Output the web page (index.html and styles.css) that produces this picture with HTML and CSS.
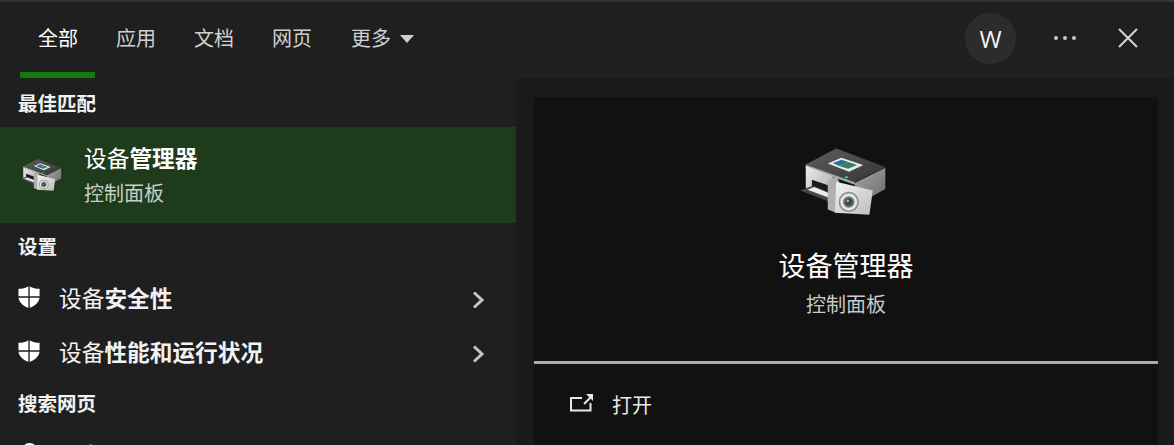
FILE: index.html
```html
<!DOCTYPE html>
<html lang="zh-CN">
<head>
    <meta charset="UTF-8">
    <title>搜索</title>
    <link rel="stylesheet" href="styles.css">
</head>
<body>

    <!-- Shared icons -->
    <svg class="icon-defs" width="0" height="0">
        <defs>
            <linearGradient id="bodyFront" x1="0" y1="0" x2="1" y2="1">
                <stop offset="0" stop-color="#ececec"/>
                <stop offset="1" stop-color="#a6a6a6"/>
            </linearGradient>
            <linearGradient id="bodySide" x1="0" y1="0" x2="1" y2="1">
                <stop offset="0" stop-color="#a8a8a8"/>
                <stop offset="1" stop-color="#6e6e6e"/>
            </linearGradient>
            <linearGradient id="camFront" x1="0" y1="0" x2="1" y2="1">
                <stop offset="0" stop-color="#f4f4f4"/>
                <stop offset="1" stop-color="#bcbcbc"/>
            </linearGradient>
            <linearGradient id="topFace" x1="0" y1="0" x2="1" y2="1">
                <stop offset="0" stop-color="#5e6060"/>
                <stop offset="1" stop-color="#333535"/>
            </linearGradient>
            <symbol id="device" viewBox="60 44 260 206">
                <polygon points="80,95 170,48 315,103 225,148" fill="url(#topFace)"/>
                <polygon points="80,95 225,148 225,155 80,104" fill="#a5a7a7"/>
                <polygon points="145,92 185,75 250,97 208,117" fill="#e2ebf1"/>
                <polygon points="160,91 186,81 208,89 178,100" fill="#2f6f96"/>
                <polygon points="178,100 208,89 232,97 205,108" fill="#3d7d62"/>
                <polygon points="80,100 160,130 160,205 80,165" fill="url(#bodyFront)"/>
                <polygon points="225,150 315,105 315,168 272,192 225,170" fill="url(#bodySide)"/>
                <polygon points="98,140 150,158 150,185 98,165" fill="#1b1b1b"/>
                <polygon points="64,172 100,158 150,178 150,205 110,190" fill="#484848"/>
                <polygon points="85,170 105,162 150,180 145,192" fill="#ececec"/>
                <polygon points="145,142 172,130 180,150 170,238 145,228" fill="#b0b0b0"/>
                <polygon points="170,146 278,172 268,244 166,238" fill="url(#camFront)"/>
                <circle cx="207" cy="206" r="30" fill="#8e9090"/>
                <circle cx="207" cy="206" r="25" fill="#e6e6e6"/>
                <circle cx="207" cy="206" r="17" fill="#6f7779"/>
                <circle cx="207" cy="206" r="11" fill="#3b4648"/>
                <circle cx="204" cy="203" r="4" fill="#8fb4ba"/>
                <circle cx="200" cy="133" r="4" fill="#49d35c"/>
            </symbol>
            <symbol id="shield" viewBox="0 0 24 24">
                <path d="M11.5 0.5 C8.5 2.5 4 3.5 0.5 3.5 V12 C0.5 17 5 21.5 11.5 23.5 C18 21.5 22.5 17 22.5 12 V3.5 C19 3.5 14.5 2.5 11.5 0.5 Z" fill="#fff"/>
                <path d="M11.5 0 V24 M0 12 H23" stroke="#1f1f1f" stroke-width="1.4" fill="none"/>
            </symbol>
            <symbol id="chevron" viewBox="0 0 12 18">
                <path d="M2 1.5 L10 9 L2 16.5" stroke="#c4c4c4" stroke-width="3" fill="none"/>
            </symbol>
        </defs>
    </svg>

    <!-- Top bar -->
    <div class="topbar">
        <div class="tabs">
            <div class="tab active">全部</div>
            <div class="tab">应用</div>
            <div class="tab">文档</div>
            <div class="tab">网页</div>
            <div class="tab more">更多<span class="caret"></span></div>
        </div>
        <div class="top-actions">
            <div class="avatar">W</div>
            <div class="dots"><span></span><span></span><span></span></div>
            <svg class="close-icon" width="20" height="20" viewBox="0 0 20 20">
                <path d="M1 1 L19 19 M19 1 L1 19" stroke="#d6d6d6" stroke-width="2" fill="none"/>
            </svg>
        </div>
    </div>

    <div class="main">
        <!-- Results list -->
        <div class="results">
            <div class="group-title first">最佳匹配</div>
            <div class="best-match">
                <svg class="device-small"><use href="#device"/></svg>
                <div>
                    <div class="best-title">设备<b>管理器</b></div>
                    <div class="best-sub">控制面板</div>
                </div>
            </div>

            <div class="group-title">设置</div>
            <div class="result-row">
                <svg class="shield-icon"><use href="#shield"/></svg>
                <div class="row-text">设备<b>安全性</b></div>
                <svg class="chevron-icon"><use href="#chevron"/></svg>
            </div>
            <div class="result-row">
                <svg class="shield-icon"><use href="#shield"/></svg>
                <div class="row-text">设备<b>性能和运行状况</b></div>
                <svg class="chevron-icon"><use href="#chevron"/></svg>
            </div>

            <div class="group-title">搜索网页</div>
            <div class="result-row">
                <svg class="search-icon" width="23" height="23" viewBox="0 0 23 23">
                    <circle cx="11.5" cy="8" r="7" stroke="#fff" stroke-width="2" fill="none"/>
                </svg>
                <div class="row-text">设备</div>
            </div>
        </div>

        <!-- Preview -->
        <div class="preview-wrap">
            <div class="preview">
                <div class="hero">
                    <svg class="device-large"><use href="#device"/></svg>
                    <div class="hero-title">设备管理器</div>
                    <div class="hero-sub">控制面板</div>
                </div>
                <div class="action-row">
                    <svg class="open-icon" width="24" height="20" viewBox="0 0 24 20">
                        <path d="M12 5 H1 V17.5 H20.5 V10" stroke="#e8e8e8" stroke-width="2" fill="none"/>
                        <path d="M14 11 L21 4" stroke="#e8e8e8" stroke-width="2" fill="none"/>
                        <path d="M16 1 H23 V8 Z" fill="#e8e8e8"/>
                    </svg>
                    <span>打开</span>
                </div>
            </div>
        </div>
    </div>

</body>
</html>
```

FILE: styles.css
```css
/* Basic styling */
html, body {
    height: 100%;
}

body {
    margin: 0;
    overflow: hidden;
    background-color: #1a1a1a;
    color: #fff;
    font-family: "Noto Sans CJK SC", "Noto Sans", sans-serif;
}

.icon-defs {
    position: absolute;
}

b {
    font-weight: 700;
}

/* Top bar */
.topbar {
    height: 76px;
    border-top: 2px solid #333;
    background-color: #1f1f1f;
    display: flex;
    justify-content: space-between;
    align-items: stretch;
}

.tabs {
    display: flex;
    padding-left: 19px;
}

.tab {
    position: relative;
    padding: 0 19px 5px;
    font-size: 20px;
    color: #d0d0d0;
    box-sizing: border-box;
    height: 76px;
    display: flex;
    align-items: center;
}

.tab.more {
    padding-left: 20px;
}

.tab.active {
    color: #fff;
}

/* Green marker under the active tab */
.tab.active::after {
    content: "";
    position: absolute;
    left: 1px;
    right: 2px;
    bottom: 0;
    height: 6px;
    background-color: #107c10;
}

.caret {
    width: 0;
    height: 0;
    margin-left: 9px;
    margin-top: 2px;
    border-left: 7.5px solid transparent;
    border-right: 7.5px solid transparent;
    border-top: 8px solid #d0d0d0;
}

.top-actions {
    display: flex;
    align-items: center;
    padding: 0 36px 4px 0;
}

.avatar {
    width: 51px;
    height: 51px;
    border-radius: 50%;
    background-color: #2c2c2c;
    font-family: "Open Sans", sans-serif;
    font-size: 24px;
    line-height: 51px;
    text-align: center;
    color: #f2f2f2;
}

.dots {
    display: flex;
    gap: 5px;
    margin: 0 42px 0 38px;
}

.dots span {
    width: 4px;
    height: 4px;
    border-radius: 50%;
    background-color: #c8c8c8;
}

/* Main area */
.main {
    display: flex;
    height: 367px;
}

.results {
    width: 516px;
    background-color: #1f1f1f;
    overflow: hidden;
}

.group-title {
    height: 49px;
    font-size: 19.5px;
    font-weight: 700;
    line-height: 46px;
    padding-left: 18px;
    color: #f2f2f2;
}

.group-title.first {
    line-height: 50px;
}

/* Best match */
.best-match {
    height: 96px;
    background-color: #1e3b1c;
    display: flex;
    align-items: center;
    padding-left: 20px;
}

.device-small {
    width: 42px;
    height: 34px;
    margin-right: 22px;
    filter: blur(0.7px);
}

.best-title {
    font-size: 22.7px;
    line-height: 34px;
}

.best-sub {
    margin-top: 1px;
    font-size: 20px;
    line-height: 34px;
    color: #c6d0c4;
}

/* Result rows */
.result-row {
    height: 54px;
    display: flex;
    align-items: center;
    padding: 0 0 4px 18px;
    box-sizing: border-box;
}

.shield-icon {
    width: 23px;
    height: 24px;
    margin: 0 18px 0 0;
}

.search-icon {
    margin-right: 18px;
}

.row-text {
    flex: 1;
    font-size: 22.7px;
    color: #f2f2f2;
}

.chevron-icon {
    width: 12px;
    height: 18px;
    margin: 5px 32px 0 0;
}

/* Preview panel */
.preview-wrap {
    flex: 1;
    padding: 19px 16px 0 18px;
}

.preview {
    height: 100%;
    background-color: #111;
}

.hero {
    height: 267px;
    box-sizing: border-box;
    border-bottom: 3px solid #aaa;
    display: flex;
    flex-direction: column;
    align-items: center;
    padding-top: 50px;
}

.device-large {
    width: 88px;
    height: 70px;
    margin-right: 6px;
    filter: blur(0.6px);
}

.hero-title {
    margin-top: 28px;
    font-size: 27px;
    line-height: 40px;
}

.hero-sub {
    margin-top: 1px;
    font-size: 20px;
    line-height: 36px;
    color: #c8c8c8;
}

.action-row {
    display: flex;
    align-items: center;
    padding: 26px 0 0 36px;
    font-size: 20px;
    color: #e8e8e8;
}

.open-icon {
    margin-right: 18px;
    margin-top: -4px;
}
```
